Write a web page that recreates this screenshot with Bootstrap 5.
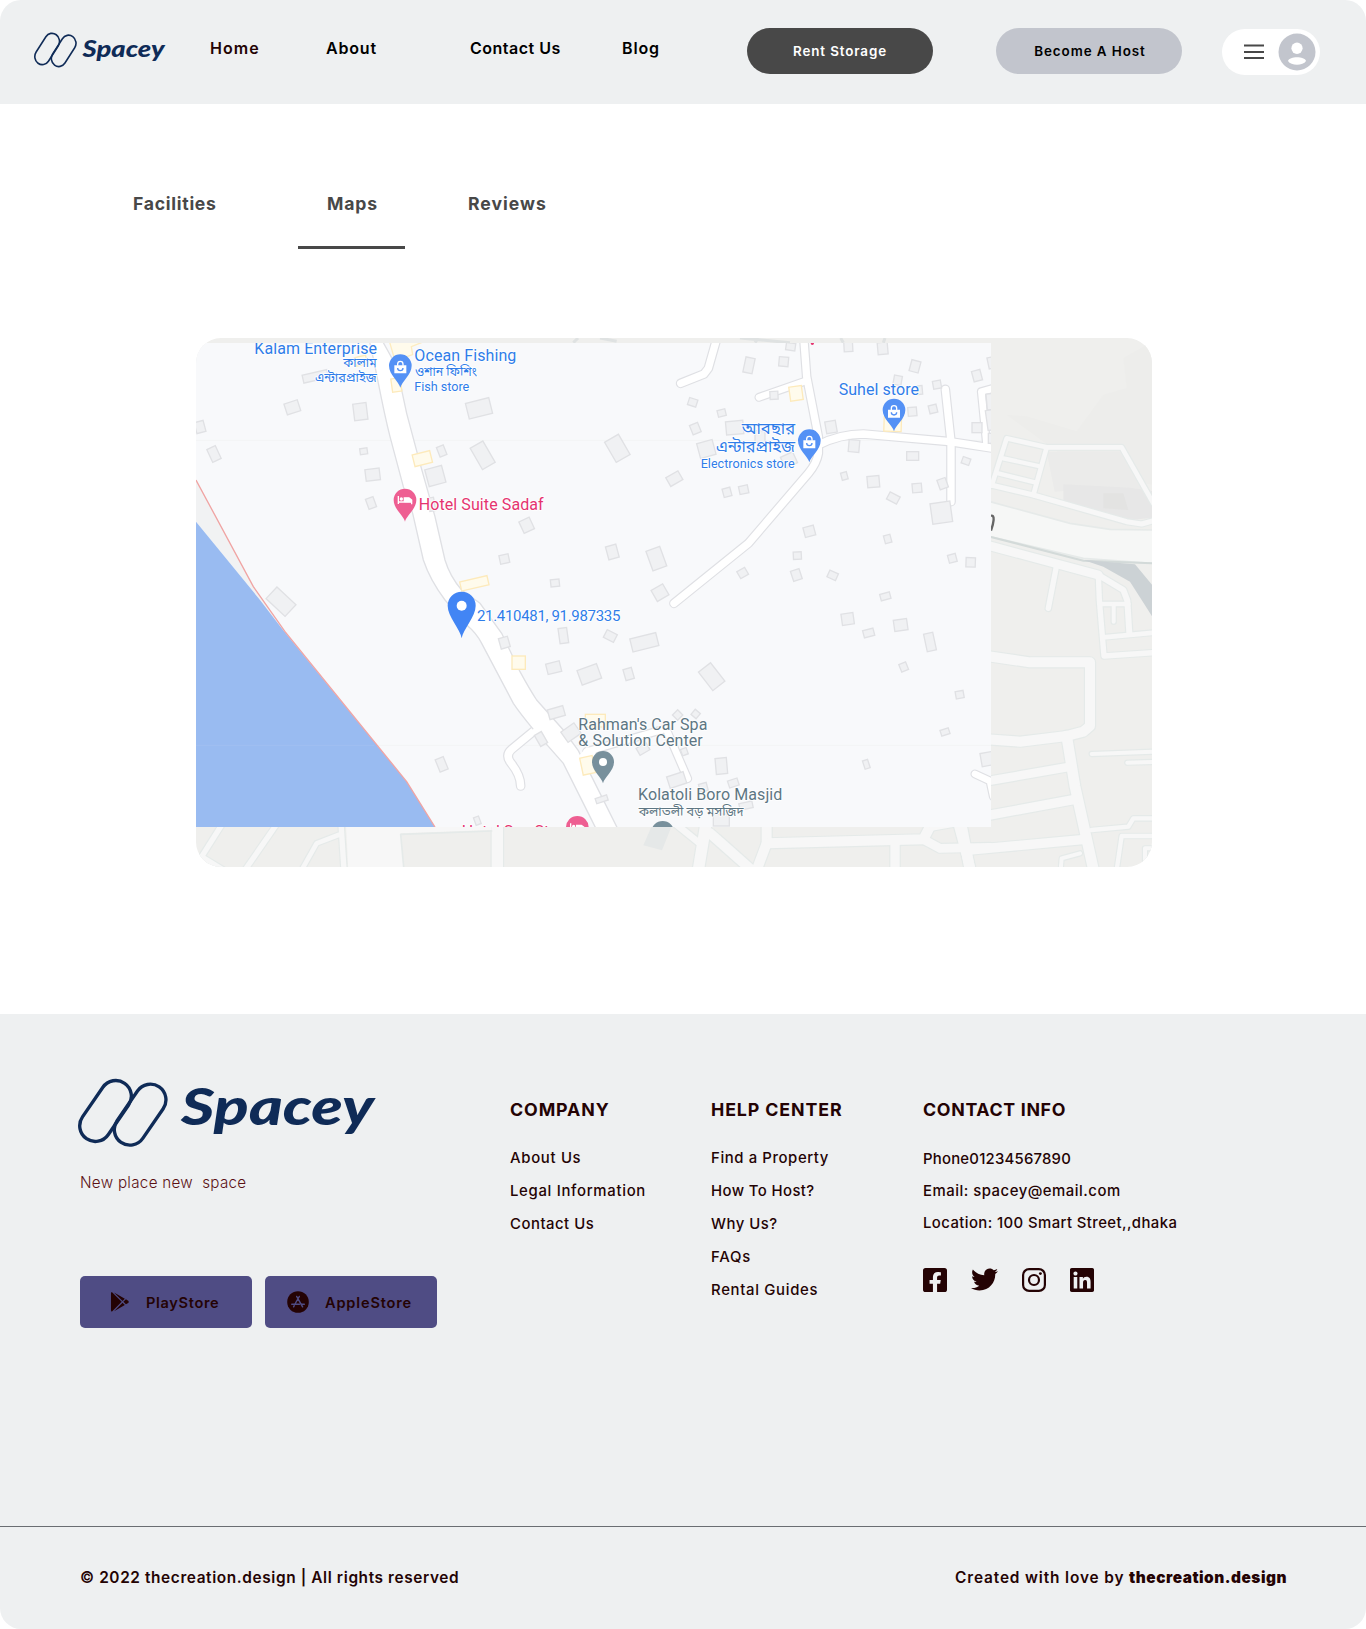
<!DOCTYPE html>
<html lang="en">
<head>
<meta charset="utf-8">
<title>Spacey</title>
<link href="https://cdn.jsdelivr.net/npm/bootstrap@5.3.0/dist/css/bootstrap.min.css" rel="stylesheet">
<style>
body{font-family:Inter,"Liberation Sans",sans-serif;background:#fff;color:#240304}
.site-head{height:104px;background:#eef0f1;border-radius:21px 21px 0 0;padding-left:34px}
.brand-top{width:176px;padding-top:32px}
.main-nav{padding-top:36px}
.main-nav a{font-size:16px;font-weight:600;line-height:24px;color:#000;text-decoration:none;white-space:nowrap;display:block}
.main-nav a.current{color:#240304}
.main-nav a:nth-child(1){width:116px;letter-spacing:1.02px}
.main-nav a:nth-child(2){width:144px;letter-spacing:.83px}
.main-nav a:nth-child(3){width:152px;letter-spacing:.5px}
.main-nav a:nth-child(4){width:125px;letter-spacing:.84px}
.pill{width:186px;height:46px;border-radius:23px;font-size:13.4px;font-weight:600;padding:0;border:0;margin-top:28px;letter-spacing:.88px}
.pill-dark,.pill-dark:hover{background:#484848;color:#fff}
.pill-soft,.pill-soft:hover{background:#c2c5cd;color:#000;margin-left:63px;padding-left:2px;letter-spacing:.93px}
.user-menu{width:98px;height:46px;border-radius:23px;margin:29px 0 0 40px}
.tabs{padding:88px 0 0 133px;height:145px}
.tabs a{font-size:17.6px;font-weight:700;line-height:24px;color:#484848;text-decoration:none;display:block}
.tabs a:nth-child(1){width:194px;letter-spacing:.72px}
.tabs a:nth-child(2){width:141px;letter-spacing:.87px}
.tabs a:nth-child(3){letter-spacing:.98px}
.tab-line{width:107px;height:3px;background:#484848;margin-left:298px;margin-top:-3px}
.map-box{width:956px;height:529px;border-radius:25px;margin:89px 0 0 196px;overflow:hidden}
.site-foot{margin-top:147px;height:615px;background:#eef0f1;border-radius:0 0 21px 21px}
.foot-main{height:513px;border-bottom:1px solid #6a6d72}
.foot-brand{width:430px;padding:64px 0 0 78px}
.foot-brand p{font-size:15.2px;font-weight:300;color:#5b1114;margin:22px 0 0 2px;line-height:22px;white-space:pre;letter-spacing:.3px}
.stores{gap:13px;margin:82px 0 0 2px}
.store{width:172px;height:52px;flex:none;border-radius:5px;background:#4f4c84;color:#240304;font-size:14.6px;font-weight:600;border:0;padding:3px 0 0}
.store svg{margin-top:-3px}
.store-play{letter-spacing:.66px;padding-left:24px}
.store-play span{margin-left:12px}
.store-apple{letter-spacing:.82px;padding-left:22px}
.store-apple span{margin-left:16px}
.foot-cols{padding:84px 0 0 80px}
.col-company{width:201px}
.col-help{width:212px}
.foot-col h2{font-size:17.8px;font-weight:700;line-height:24px;margin:0 0 20px;letter-spacing:.89px;white-space:nowrap}
.foot-col li{font-size:14.9px;font-weight:500;line-height:33px;white-space:nowrap}
.foot-col.col-contact h2{letter-spacing:.66px;margin-bottom:21px}
.foot-col.col-contact li{line-height:32px}
.ls-2{letter-spacing:.22px}.ls-4{letter-spacing:.41px}.ls-5{letter-spacing:.51px}.ls-6{letter-spacing:.6px}.ls-65{letter-spacing:.69px}.ls-8{letter-spacing:.77px}
.social{gap:24px;margin-top:27px}
.foot-end{height:102px;padding:0 79px 0 80px;font-size:15.4px;font-weight:600;letter-spacing:.61px}
.credit{letter-spacing:.86px}
.credit b{letter-spacing:.52px}
</style>
<script src="https://cdn.jsdelivr.net/npm/bootstrap@5.3.0/dist/js/bootstrap.bundle.min.js"></script>
</head>
<body>
<svg width="0" height="0" class="d-none">
<symbol id="mark-icon" viewBox="54 54 268 208" preserveAspectRatio="none"><g fill="none" stroke="#0f2b57" stroke-width="10"><rect x="89.500" y="52" width="93" height="200" rx="46.500" transform="rotate(34.600 136 152)"/><rect x="192.500" y="63" width="93" height="200" rx="46.500" transform="rotate(34.600 239 163)"/></g></symbol>
</svg>

<header class="site-head d-flex align-items-start">
  <div class="brand-top d-flex">
    <svg width="43" height="36"><use href="#mark-icon"/></svg>
    <svg width="90" height="36" class="ms-1" overflow="visible"><text x="1.500" y="24.800" font-family="Lato" font-weight="900" font-style="italic" font-size="22" fill="#0f2b57" textLength="82" lengthAdjust="spacingAndGlyphs">Spacey</text></svg>
  </div>
  <nav class="main-nav d-flex">
    <a href="#" class="current">Home</a>
    <a href="#">About</a>
    <a href="#">Contact Us</a>
    <a href="#">Blog</a>
  </nav>
  <button class="btn pill pill-dark">Rent Storage</button>
  <button class="btn pill pill-soft">Become A Host</button>
  <div class="user-menu bg-white">
    <svg width="98" height="46"><path d="M22 16.500h20M22 23h20M22 29h20" stroke="#484848" stroke-width="2"/><circle cx="75" cy="23" r="18.500" fill="#c2c5cd"/><ellipse cx="75" cy="19.300" rx="5.600" ry="5.700" fill="#fff"/><path d="M66 32c1.500-5 16.500-5 18 0-3 5-15 5-18 0z" fill="#fff"/></svg>
  </div>
</header>

<main>
  <nav class="tabs d-flex">
    <a href="#">Facilities</a>
    <a href="#">Maps</a>
    <a href="#">Reviews</a>
  </nav>
  <div class="tab-line"></div>

  <div class="map-box">
  <svg width="956" height="529" viewBox="18 24 2868 1587" font-family="Roboto,'Noto Sans Bengali','Noto Sans',sans-serif">
    <defs>
      <clipPath id="front"><rect x="18" y="39" width="2385" height="1452"/></clipPath>
      <symbol id="bag" viewBox="-20 -20 40 40" overflow="visible"><path d="M-18-5h36v24h-36z" fill="#fff"/><path d="M-8-4v-5a8 8 0 0 1 16 0v5" fill="none" stroke="#fff" stroke-width="4"/><path d="M-8 3a8 8 0 0 0 16 0" fill="none" stroke="#5491f5" stroke-width="4"/></symbol>
    </defs>
    <rect x="18" y="24" width="2868" height="1587" fill="#efefed"/>
    <path d="M2450 255l60 4 150 45 80-110 70-20-10-90 70-40h20v420l-140-20-150-80z" fill="#ededeb"/>
    <path d="M2570 365h220l90 150-176-40-110 10z" fill="#ebebea"/>
    <path d="M2620 463l200 10 66 10v80l-90 10-176-60z" fill="#e7e7e7"/>
    <path d="M2740 490h60l15 50-75-5z" fill="#e3e3e2"/>
    <path d="M1384 1491h60l-28 70-56-15z" fill="#e5e8e8"/>
    <g id="backroads" fill="none" stroke-linejoin="round" stroke-linecap="round"></g>
    <path d="M2400 515l240 65 120 18 130 2v100l-210-15-280-65z" fill="#f6f7f6" stroke="#e6eae9" stroke-width="5"/>
    <path d="M2400 620l280 72 210 8" fill="none" stroke="#d3dad9" stroke-width="6"/>
    <path d="M2680 690l155 13 55 66v96l-35-55-35-55-80-45z" fill="#ccd2d5"/>
    <path d="M2400 558c18-8 10 24 3 44" fill="none" stroke="#666" stroke-width="7"/>
    <path d="M1230 24l50 10M1650 24l150 14M1695 38l10-14M1960 38l-8-14M2080 38l5-14M1150 38l14-14" stroke="#dfe2e2" stroke-width="9"/>
    <g clip-path="url(#front)">
      <rect x="18" y="39" width="2385" height="1452" fill="#f8f9fb"/>
      <path d="M18 331h2385M18 1246h2385" stroke="#f3f5f5" stroke-width="3"/>
      <path d="M18 450l167 310 90 135-65-85L18 575z" fill="#f1f2f3"/>
      <path d="M18 575l192 235 65 85 375 460 85 136H18z" fill="#99bbf1"/>
      <path d="M18 1246h535" stroke="#a0bff1" stroke-width="3"/>
      <path d="M18 450L190 770 285 905 650 1355 735 1491" fill="none" stroke="#f0a4a3" stroke-width="4"/>
      <g id="frontroads" fill="none" stroke-linejoin="round" stroke-linecap="round"></g>
      <path d="M535 20C560 120 570 200 600 320L640 470 668 550 700 690Q720 750 765 810L830 885Q860 910 875 940L970 1120Q990 1150 1030 1198L1120 1300 1200 1460 1225 1510H1290L1205 1340 1165 1262 1120 1200 1040 1110Q1020 1080 990 1025L935 910 870 820 815 780Q780 740 765 690L735 560 690 400 650 250 620 110 570 20z" fill="#fff" stroke="#dfe0e4" stroke-width="4"/>
      <path d="M1024 1202l14-12 20 20-14 12zM1160 1285l30-34 30 10-10 24z" fill="#fff"/>
      <g id="blocks"></g>
      <path d="M597 30l18 62 53-18-4-24 40-16" fill="#fffbec" stroke="#fdecc0" stroke-width="4"/>
      <g id="pins"></g>
      <g stroke="#fff" stroke-width="5" stroke-linejoin="round" paint-order="stroke">
        <g fill="#2f7de9" font-size="48">
          <text x="193" y="71" textLength="368">Kalam Enterprise</text>
          <text x="673" y="94" textLength="306">Ocean Fishing</text>
          <text x="1946" y="194" textLength="241">Suhel store</text>
          <text x="861" y="874" font-size="45" textLength="430">21.410481, 91.987335</text>
          <text x="673" y="183" font-size="38" textLength="165">Fish store</text>
          <text x="1532" y="415" font-size="38" textLength="282">Electronics store</text>
          <text x="460" y="112" font-size="36" textLength="100" lengthAdjust="spacingAndGlyphs">কালাম</text>
          <text x="375" y="155" font-size="36" textLength="185" lengthAdjust="spacingAndGlyphs">এন্টারপ্রাইজ</text>
          <text x="675" y="138" font-size="36" textLength="186" lengthAdjust="spacingAndGlyphs">ওশান ফিশিং</text>
          <text x="1655" y="312" font-size="46" textLength="160" lengthAdjust="spacingAndGlyphs">আবছার</text>
          <text x="1578" y="366" font-size="46" textLength="237" lengthAdjust="spacingAndGlyphs">এন্টারপ্রাইজ</text>
        </g>
        <g fill="#e5336f" font-size="48">
          <text x="686" y="539" textLength="375">Hotel Suite Sadaf</text>
          <text x="815" y="1520" textLength="305">Hotel Sea Star</text>
        </g>
        <g fill="#5d7683" font-size="48">
          <text x="1165" y="1200" textLength="387">Rahman's Car Spa</text>
          <text x="1165" y="1248" textLength="373">&amp; Solution Center</text>
          <text x="1344" y="1410" textLength="433">Kolatoli Boro Masjid</text>
          <text x="1346" y="1459" font-size="36" textLength="315" lengthAdjust="spacingAndGlyphs">কলাতলী বড় মসজিদ</text>
        </g>
      </g>
      <circle cx="1867" cy="40" r="5" fill="#e5336f"/>
    </g>
  </svg>
  </div>
</main>

<footer class="site-foot">
  <div class="foot-main d-flex align-items-start">
    <div class="foot-brand">
      <div class="d-flex">
        <svg width="90" height="72"><use href="#mark-icon" width="90" height="70"/></svg>
        <svg width="210" height="72" overflow="visible"><text x="13" y="46.500" font-family="Lato" font-weight="900" font-style="italic" font-size="51" fill="#0f2b57" textLength="193" lengthAdjust="spacingAndGlyphs">Spacey</text></svg>
      </div>
      <p>New place new  space</p>
      <div class="stores d-flex">
        <button class="store store-play d-flex align-items-center"><svg width="30" height="22"><path transform="translate(6 1) scale(.0385)" d="M325.300 234.300L104.600 13l280.800 161.200-60.100 60.100zM47 0C34 6.800 25.300 19.200 25.300 35.300v441.300c0 16.100 8.700 28.500 21.700 35.300l256.600-256L47 0zm425.200 225.600l-58.900-34.100-65.700 64.500 65.700 64.500 60.100-34.100c18-14.300 18-46.500-1.200-60.800zM104.600 499l280.800-161.200-60.100-60.100L104.600 499z" fill="#240304"/></svg><span>PlayStore</span></button>
        <button class="store store-apple d-flex align-items-center"><svg width="22" height="22" viewBox="0 0 22 22"><circle cx="11" cy="11" r="10.800" fill="#240304"/><path d="M12.300 5.500L7.400 14M9.700 5.500l5.900 10.300M4.800 13.200h7.600M14.600 13.200h2.700M6.600 15.800l.4-.7" stroke="#4f4c84" stroke-width="1.500" stroke-linecap="round"/></svg><span>AppleStore</span></button>
      </div>
    </div>
    <div class="foot-cols d-flex">
      <div class="foot-col col-company"><h2>COMPANY</h2>
        <ul class="list-unstyled"><li class="ls-65">About Us</li><li class="ls-65">Legal Information</li><li class="ls-5">Contact Us</li></ul></div>
      <div class="foot-col col-help"><h2>HELP CENTER</h2>
        <ul class="list-unstyled"><li class="ls-6">Find a Property</li><li class="ls-4">How To Host?</li><li class="ls-5">Why Us?</li><li class="ls-8">FAQs</li><li class="ls-65">Rental Guides</li></ul></div>
      <div class="foot-col col-contact"><h2>CONTACT INFO</h2>
        <ul class="list-unstyled mb-0"><li class="ls-2">Phone01234567890</li><li class="ls-5">Email: spacey@email.com</li><li class="ls-4">Location: 100 Smart Street,,dhaka</li></ul>
        <div class="social d-flex align-items-center">
          <svg width="24" height="24" viewBox="0 32 448 448" fill="#240304"><path d="M400 32H48A48 48 0 0 0 0 80v352a48 48 0 0 0 48 48h137.250V327.690h-63V256h63v-54.640c0-62.150 37-96.480 93.670-96.480 27.140 0 55.520 4.840 55.520 4.840v61h-31.270c-30.810 0-40.420 19.120-40.420 38.730V256h68.780l-11 71.690h-57.780V480H400a48 48 0 0 0 48-48V80a48 48 0 0 0-48-48z"/></svg>
          <svg width="27" height="27" viewBox="0 0 512 512" fill="#240304"><path d="M459.370 151.716c.325 4.548.325 9.097.325 13.645 0 138.720-105.583 298.558-298.558 298.558-59.452 0-114.680-17.219-161.137-47.106 8.447.974 16.568 1.299 25.340 1.299 49.055 0 94.213-16.568 130.274-44.832-46.132-.975-84.792-31.188-98.112-72.772 6.498.974 12.995 1.624 19.818 1.624 9.421 0 18.843-1.300 27.614-3.573-48.081-9.747-84.143-51.980-84.143-102.985v-1.299c13.969 7.797 30.214 12.670 47.431 13.319-28.264-18.843-46.781-51.005-46.781-87.391 0-19.492 5.197-37.360 14.294-52.954 51.655 63.675 129.300 105.258 216.365 109.807-1.624-7.797-2.599-15.918-2.599-24.040 0-57.828 46.782-104.934 104.934-104.934 30.213 0 57.502 12.670 76.670 33.137 23.715-4.548 46.456-13.320 66.599-25.340-7.798 24.366-24.366 44.833-46.132 57.827 21.117-2.273 41.584-8.122 60.426-16.243-14.292 20.791-32.161 39.308-52.628 54.253z"/></svg>
          <svg width="24" height="24" viewBox="0 0 24 24" fill="none" stroke="#240304" stroke-width="2.200"><rect x="1.100" y="1.100" width="21.800" height="21.800" rx="6"/><circle cx="12" cy="12" r="5"/><circle cx="18.400" cy="5.600" r="1.450" fill="#240304" stroke="none"/></svg>
          <svg width="24" height="24" viewBox="0 32 448 448" fill="#240304"><path d="M416 32H31.900C14.300 32 0 46.500 0 64.300v383.400C0 465.500 14.300 480 31.900 480H416c17.600 0 32-14.500 32-32.300V64.300c0-17.800-14.400-32.300-32-32.300zM135.400 416H69V202.200h66.500V416zm-33.200-243c-21.300 0-38.500-17.300-38.500-38.500S80.900 96 102.200 96c21.200 0 38.500 17.300 38.500 38.500 0 21.300-17.200 38.500-38.500 38.500zm282.100 243h-66.400V312c0-24.800-.5-56.700-34.500-56.700-34.600 0-39.900 27-39.900 54.900V416h-66.400V202.200h63.700v29.200h.9c8.900-16.800 30.600-34.500 62.900-34.500 67.200 0 79.700 44.300 79.700 101.900V416z"/></svg>
        </div></div>
    </div>
  </div>
  <div class="foot-end d-flex justify-content-between align-items-center">
    <span>© 2022 thecreation.design | All rights reserved</span>
    <span class="credit">Created with love by <b>thecreation.design</b></span>
  </div>
</footer>

<script>
const add=(id,html)=>document.getElementById(id).innerHTML+=html;
// roads: [width, path]; every casing is drawn before any surface
function roads(id,list,casing,fill){
  add(id,list.map(r=>`<path d="${r[1]}" stroke="${casing}" stroke-width="${r[0]+7}"/>`).join('')+list.map(r=>`<path d="${r[1]}" stroke="${fill}" stroke-width="${r[0]}"/>`).join(''));
}
roads('backroads',[
[14,'M2405 467L2450 325 2570 352H2795L2890 520'],[14,'M2570 352L2530 495'],[13,'M2440 385L2545 408'],[13,'M2425 430L2538 458'],
[15,'M2390 462L2530 495 2810 575 2855 582 2890 572'],[26,'M2390 645L2725 735'],[18,'M2725 735L2800 780 2812 812 2818 910'],[16,'M2600 705L2575 835'],
[16,'M2725 735L2728 810 2742 978 2890 968'],[14,'M2735 822H2815'],[12,'M2771 825V875'],[14,'M2740 922L2890 908'],
[30,'M2390 978L2520 997H2700V1188L2680 1205 2630 1218 2490 1235 2390 1228'],[32,'M2630 1218L2655 1370 2715 1640'],
[26,'M2390 1354L2640 1310'],[28,'M2390 1457L2655 1408'],[28,'M2340 1560L2685 1528'],[12,'M2705 1272L2890 1265'],[12,'M2812 1298L2890 1296'],
[13,'M2705 1500L2815 1490 2830 1465H2890'],[13,'M2780 1620L2795 1518H2890'],[12,'M2865 1620V1555H2890'],[12,'M2612 1620L2615 1585 2670 1570'],
[30,'M2305 1480L2345 1630'],[16,'M95 1485L35 1580 100 1620'],[16,'M262 1480L165 1620'],[14,'M445 1515L380 1540 335 1620'],[16,'M453 1480L462 1620'],
[34,'M922 1480V1620'],[20,'M1455 1480L1535 1545'],[34,'M1548 1480L1525 1620'],[30,'M1560 1510L1600 1545 1690 1625'],
[30,'M1730 1480V1540L1700 1620'],[30,'M1730 1540L2200 1528 2225 1480'],[26,'M2200 1528L2250 1555 2400 1552'],[28,'M2115 1540V1620'],[32,'M2313 1480L2340 1620'],[14,'M2225 1495L2310 1480']
],'#e5eae9','#f7f7f7');
add('backroads','<path d="M468 1485H905V1500L632 1510 642 1620H475z" fill="#f7f7f7"/><path d="M905 1503L632 1513 642 1620" stroke="#e5eae9" stroke-width="5"/>');
roads('frontroads',[
[22,'M1582 20L1555 115 1542 132 1472 160'],
[22,'M1841 20L1850 140 1885 320V370Q1880 400 1855 430L1675 640 1452 820'],[20,'M1707 202L1850 152'],
[22,'M1885 345Q1950 312 2020 312L2280 335 2410 355'],[22,'M2266 178L2283 335V515'],[20,'M2410 175L2374 185 2390 345'],
[22,'M1035 1200L965 1258Q945 1275 962 1298 992 1335 992 1368'],[20,'M1190 1265L1428 1196 1493 1346'],[20,'M2355 1332L2400 1353 2410 1400']
],'#dfe0e4','#fff');
// buildings: [centre x, centre y, width, height, rotation]
const grey=[[376,139,76,24,-13],[307,232,42,34,-18],[511,245,40,50,-7],[867,235,72,48,-14],[30,291,28,34,-15],[72,372,28,42,-25],[521,364,22,18,-8],[548,434,43,35,-7],[543,519,24,32,-20],[755,363,22,30,-22],[736,438,52,52,-15],[878,376,44,74,-30],[725,523,18,40,-10],[1010,586,34,38,-25],[943,687,28,26,-12],[1095,759,26,22,-6],[273,815,78,48,43],[943,938,28,32,-16],[1120,917,26,46,-8],[1091,1013,42,32,-14],[1198,1033,62,46,-20],[1099,1148,48,30,-16],[1143,1208,48,38,-35],[1053,1227,24,38,-30],[755,1303,26,40,-22],[862,1472,16,24,-20],
[1802,50,28,22,8],[1677,106,28,46,12],[1781,95,28,28,5],[1975,50,26,30,-3],[2078,55,30,36,-5],[2175,109,28,34,15],[2123,151,24,28,10],[2241,164,24,24,-10],[1752,196,24,24,-3],[1508,217,26,22,18],[1595,249,24,20,-14],[1516,296,26,30,-22],[1634,293,52,40,-5],[1710,320,30,36,0],[1549,357,48,46,-15],[1797,390,40,36,-25],[1923,291,32,36,-10],[2167,245,26,26,-5],[2229,237,24,24,-14],[2190,180,14,26,-5],[1992,348,32,36,5],[2168,378,36,26,0],[2328,393,24,20,20],[2361,137,26,32,-15],[2361,293,30,30,0],[2406,98,24,34,-12],[2404,215,28,48,-5],[2404,270,28,60,-8],[2405,325,20,30,0],[1282,355,48,70,-30],[1453,446,42,30,-30],[1611,487,24,26,-15],[1661,479,27,24,-12],[1963,438,18,22,-15],[2050,455,36,34,-5],[2110,504,34,24,28],[2181,474,28,27,-5],[2258,461,26,30,-20],[2254,548,60,62,-8],[1858,604,32,30,-15],[2093,627,20,24,-15],[1267,666,32,40,-15],[1399,686,44,62,-20],[1410,788,40,38,-30],[1658,729,27,24,-30],[1819,735,27,32,-18],[1822,677,24,22,-3],[1928,736,28,22,24],[2086,799,30,20,-15],[2287,685,24,24,-15],[2342,697,28,28,2],
[1261,918,34,26,27],[1363,937,80,40,-14],[1316,1032,26,34,-16],[1565,1040,46,70,-38],[1463,1155,22,22,45],[1517,1152,20,20,40],[1594,1308,34,48,-5],[1460,1350,52,36,-18],[1630,1359,30,22,-18],[1540,1372,24,24,-15],[1668,1427,40,20,-12],[1594,1470,48,36,0],[1359,1257,34,24,-30],[1483,1265,18,20,-20],[1973,867,36,34,-8],[2036,909,32,22,-15],[2132,885,40,34,-8],[2220,936,28,54,-12],[2141,1011,22,24,-22],[2309,1094,24,22,-10],[2265,1206,26,18,-18],[2029,1303,16,26,-18],[2393,1287,40,40,-10],[1235,1408,36,16,-18]];
const warm=[[697,386,54,36,-14],[853,760,84,28,-13],[619,165,28,40,-8],[513,92,34,26,-14],[986,998,40,40,0],[1193,1306,38,52,-12],[1216,1172,60,38,0],[1818,190,38,42,-8],[2108,283,52,42,2]];
const block=(c,f,s)=>`<rect x="${c[0]-c[2]/2}" y="${c[1]-c[3]/2}" width="${c[2]}" height="${c[3]}" transform="rotate(${c[4]} ${c[0]} ${c[1]})" fill="${f}" stroke="${s}" stroke-width="4"/>`;
add('blocks',grey.map(c=>block(c,'#f0f1f3','#e0e1e4')).join('')+warm.map(c=>block(c,'#fffbec','#fdeabb')).join(''));
// pins: [x, y, radius, tip depth, colour, glyph]
const dot=r=>`<circle r="${r}" fill="#fff"/>`, bag='<use href="#bag" x="-20" y="-16" width="40" height="40"/>',
 bed='<path d="M-20-12v24M-20 6h40v7M20 6V0l-8-6h-14V4" fill="none" stroke="#fff" stroke-width="4"/><path d="M-2-7h14l8 7v7H-2z" fill="#fff"/><circle cx="-11" cy="-3" r="5" fill="#fff"/>';
[[631,107,34,66,'#5491f5',bag],[645,510,34,65,'#ee5f92',bed],[815,827,42,98,'#4285f4',dot(15)],[1858,332,34,65,'#5491f5',bag],[2112,240,34,64,'#5491f5',bag],[1239,1296,33,64,'#78909c',dot(12)],[1418,1507,34,65,'#78909c',dot(12)],[1162,1492,34,65,'#ee5f92',bed]]
.forEach(p=>add('pins',`<g transform="translate(${p[0]} ${p[1]})"><path d="M0 ${p[3]}C-4 ${p[3]*.72} ${-p[2]} ${p[2]*.8} ${-p[2]} 0A${p[2]} ${p[2]} 0 0 1 ${p[2]} 0C${p[2]} ${p[2]*.8} 4 ${p[3]*.72} 0 ${p[3]}z" fill="${p[4]}"/>${p[5]}</g>`));
</script>
</body>
</html>
